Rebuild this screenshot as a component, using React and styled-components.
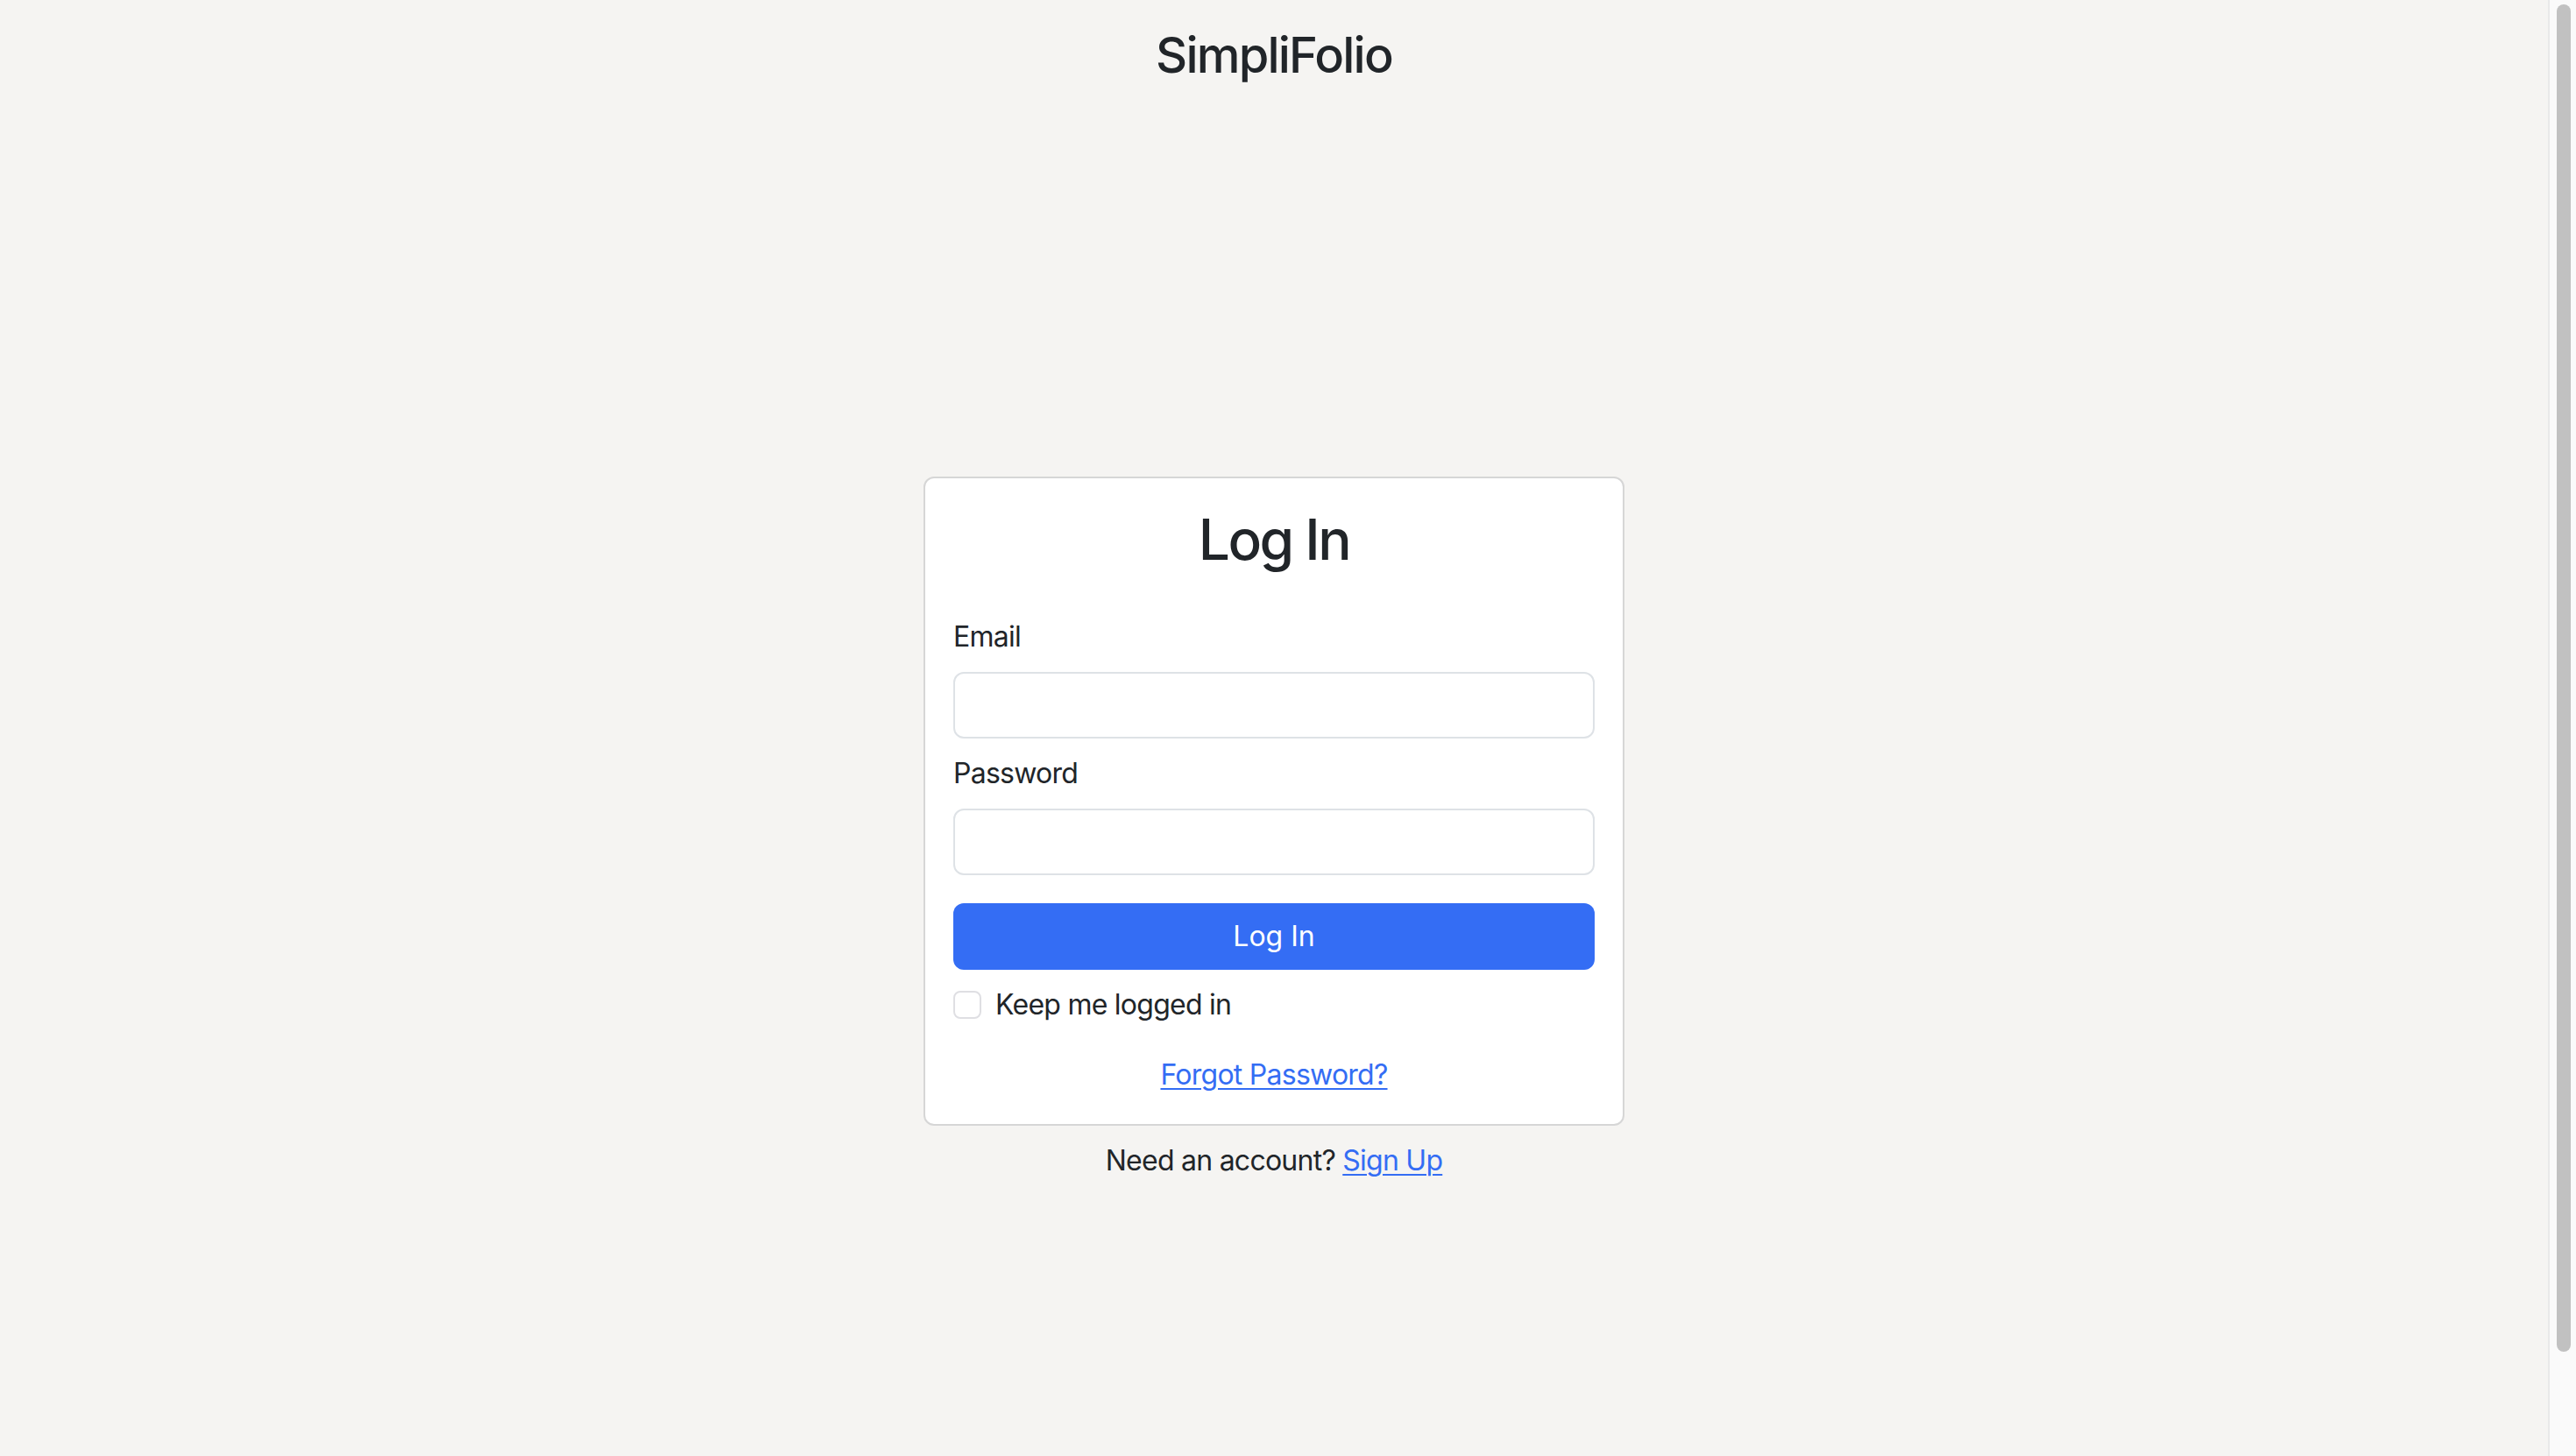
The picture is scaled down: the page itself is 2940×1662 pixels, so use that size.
import React, { useState } from 'react';
import styled, { createGlobalStyle } from 'styled-components';

const GlobalStyle = createGlobalStyle`
  html {
    background: #f5f4f2;
  }

  body {
    margin: 0;
    background: #f5f4f2;
    color: #212529;
    font-family: Inter, "Noto Sans", "Liberation Sans", sans-serif;
    font-size: 32px;
    line-height: 1.5;
    letter-spacing: -0.75px;
  }

  * {
    box-sizing: border-box;
  }
`;

// window frame: page on the left, scroll track on the right
const Shell = styled.div`
  display: flex;
  height: 100vh;
  overflow: hidden;
`;

const Page = styled.div`
  flex: 1;
  min-width: 0;
  overflow: hidden;
`;

const ScrollTrack = styled.div`
  flex: 0 0 30px;
  padding: 5px 6px 0 8px;
  background: #fafafa;
  border-left: 2px solid #e9e9e9;
`;

const ScrollThumb = styled.div`
  width: 16px;
  height: ${props => props.ratio * 100}%;
  border-radius: 8px;
  background: #c1c1c1;
`;

const Header = styled.header`
  padding: 30px 0 18px;
  text-align: center;
`;

const Brand = styled.h1`
  margin: 0;
  font-size: 56px;
  font-weight: 500;
  line-height: 1.2;
  letter-spacing: -1.8px;
`;

const Main = styled.main`
  min-height: 100vh;
  display: flex;
  flex-direction: column;
  align-items: center;
  justify-content: center;
`;

const Card = styled.div`
  width: 800px;
  padding: 32px;
  background: #fff;
  border: 2px solid #d6d6d6;
  border-radius: 12px;
`;

const Title = styled.h2`
  margin: 0 0 48px;
  font-size: 64px;
  font-weight: 500;
  line-height: 1.2;
  text-align: center;
  letter-spacing: -2.5px;
`;

const Field = styled.div`
  margin-bottom: 16px;
`;

const Label = styled.label`
  display: block;
  margin-bottom: 16px;
`;

const Input = styled.input`
  display: block;
  width: 100%;
  height: 76px;
  padding: 12px 24px;
  font: inherit;
  color: #212529;
  background: #fff;
  border: 2px solid #dee2e6;
  border-radius: 12px;
  outline: none;
`;

const SubmitButton = styled.button`
  display: block;
  width: 100%;
  height: 76px;
  margin-top: 32px;
  font: inherit;
  color: #fff;
  background: #346df4;
  border: none;
  border-radius: 12px;
  cursor: pointer;
`;

const CheckRow = styled.label`
  display: flex;
  align-items: center;
  gap: 16px;
  margin-top: 16px;
`;

const CheckBox = styled.span`
  width: 32px;
  height: 32px;
  border: 2px solid #dfdfe3;
  border-radius: 8px;
  background: ${props => (props.checked ? '#346df4' : '#fff')};
`;

const LinkRow = styled.div`
  margin-top: 32px;
  text-align: center;
`;

const TextLink = styled.a`
  color: #346df4;
  text-decoration: underline;
  text-underline-offset: 4px;
  text-decoration-thickness: 2px;
  cursor: pointer;
`;

const Footnote = styled.p`
  margin: 16px 0 0;
  text-align: center;
`;

export default function App() {
  const [keep, setKeep] = useState(false);

  return (
    <>
      <GlobalStyle />
      <Shell>
        <Page>
          <Header>
            <Brand>SimpliFolio</Brand>
          </Header>
          <Main>
            <Card>
              <Title>Log In</Title>
              <Field>
                <Label htmlFor="email">Email</Label>
                <Input id="email" type="email" />
              </Field>
              <Field>
                <Label htmlFor="password">Password</Label>
                <Input id="password" type="password" />
              </Field>
              <SubmitButton type="button">Log In</SubmitButton>
              <CheckRow onClick={() => setKeep(!keep)}>
                <CheckBox checked={keep} />
                Keep me logged in
              </CheckRow>
              <LinkRow>
                <TextLink>Forgot Password?</TextLink>
              </LinkRow>
            </Card>
            <Footnote>
              Need an account? <TextLink>Sign Up</TextLink>
            </Footnote>
          </Main>
        </Page>
        <ScrollTrack>
          <ScrollThumb ratio={0.928} />
        </ScrollTrack>
      </Shell>
    </>
  );
}
